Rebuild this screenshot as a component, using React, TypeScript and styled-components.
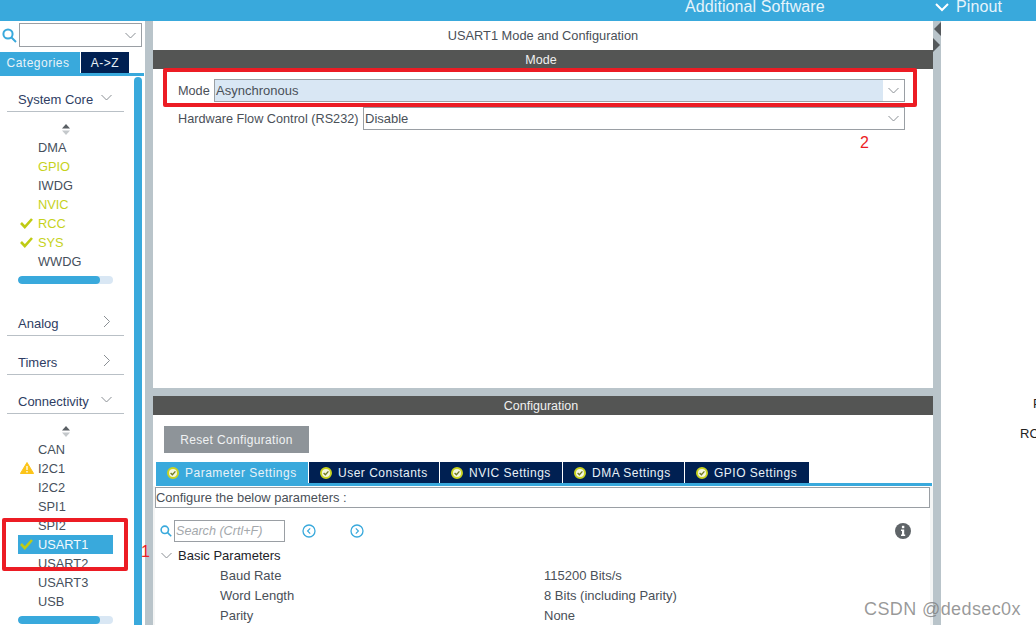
import styled, { createGlobalStyle } from "styled-components";

const GlobalStyle = createGlobalStyle`
  html, body {
    margin: 0;
    padding: 0;
    background: #fff;
  }
  body {
    font-family: 'Liberation Sans', Arial, sans-serif;
    font-size: 13px;
    color: #46505c;
  }
  * {
    box-sizing: border-box;
  }
`;

const Page = styled.div`
  position: relative;
  width: 1036px;
  height: 625px;
  overflow: hidden;
  display: flex;
  flex-direction: column;
`;

const TopBar = styled.header`
  height: 21px;
  flex: none;
  background: #39a9dc;
  color: #e6f4fb;
  font-size: 16px;
  letter-spacing: 0.1px;
  line-height: 14px;
  display: flex;
  justify-content: flex-end;
  overflow: hidden;
`;

const TopLabel = styled.span<{ $width: number }>`
  width: ${({ $width }) => $width}px;
  display: flex;
  align-items: center;
  gap: 7px;
  height: 14px;
`;

const Body = styled.div`
  flex: 1;
  display: flex;
  min-height: 0;
`;

/* left category list */
const Sidebar = styled.aside`
  width: 145px;
  flex: none;
  display: flex;
  flex-direction: column;
`;

const SearchRow = styled.div`
  height: 31px;
  flex: none;
  padding: 2px 3px 0 2px;
  display: flex;
  gap: 2px;
`;

const SearchSlot = styled.span`
  margin-top: 5px;
  display: flex;
  height: 15px;
`;

const ComboBox = styled.div`
  width: 123px;
  height: 24px;
  border: 1px solid #9a9fa4;
  display: flex;
  align-items: center;
  justify-content: flex-end;
  padding-right: 5px;
`;

const SideTabs = styled.div`
  height: 24px;
  flex: none;
  display: flex;
  align-items: stretch;
  border-bottom: 3px solid #39a9dc;
  width: 144px;
`;

const SideTab = styled.div<{ $active?: boolean; $width: number }>`
  width: ${({ $width }) => $width}px;
  margin-right: 1px;
  padding-right: ${({ $active }) => ($active ? 4 : 0)}px;
  background: ${({ $active }) => ($active ? "#39a9dc" : "#002052")};
  color: #e8f2f8;
  font-size: 12px;
  letter-spacing: 0.5px;
  display: flex;
  align-items: center;
  justify-content: center;
`;

const SideBody = styled.div`
  flex: 1;
  min-height: 0;
  display: flex;
  overflow: hidden;
`;

const SideList = styled.div`
  width: 134px;
  flex: none;
  padding: 0 10px 0 7px;
`;

const SideScroll = styled.div`
  width: 8px;
  margin-top: 1px;
  margin-bottom: -8px;
  background: #39a9dc;
  border-radius: 4px 4px 0 0;
`;

const GroupHead = styled.div<{ $top: number }>`
  margin-top: ${({ $top }) => $top}px;
  height: 25px;
  border-bottom: 1px solid #b9c0c6;
  padding: 0 12px 0 11px;
  display: flex;
  justify-content: space-between;
  align-items: center;
  color: #2e3d63;
  font-size: 13px;
  svg {
    margin-top: -4px;
  }
`;

const Stepper = styled.div`
  height: 23px;
  padding-top: 12px;
  margin-bottom: 3px;
  display: flex;
  justify-content: center;
`;

const ItemRow = styled.div<{ $selected?: boolean; $lit?: boolean }>`
  width: 95px;
  height: 19px;
  margin-left: 11px;
  padding-left: 20px;
  position: relative;
  display: flex;
  align-items: center;
  font-size: 12.8px;
  background: ${({ $selected }) => ($selected ? "#39a9dc" : "transparent")};
  color: ${({ $selected, $lit }) =>
    $selected ? "#f2f9fd" : $lit ? "#c6d21c" : "#46505c"};
`;

const ItemIcon = styled.span`
  position: absolute;
  left: 2px;
  top: 3px;
  display: flex;
`;

const HScroll = styled.div`
  width: 95px;
  height: 8px;
  margin-left: 11px;
  margin-top: 5px;
  border-radius: 4px;
  background: #d9e7f4;
  overflow: hidden;
`;

const HScrollThumb = styled.div`
  width: 82px;
  height: 100%;
  border-radius: 4px;
  background: #39a9dc;
`;

const Gutter = styled.div`
  width: 8px;
  flex: none;
  background: #b9c4ca;
  position: relative;
`;

/* middle column */
const Center = styled.main`
  width: 780px;
  flex: none;
  display: flex;
  flex-direction: column;
  background: #b9c4ca;
`;

const ModePanel = styled.section`
  height: 367px;
  flex: none;
  background: #fff;
`;

const PanelTitle = styled.div`
  height: 29px;
  display: flex;
  align-items: center;
  justify-content: center;
  font-size: 12.8px;
  color: #4a5058;
`;

const DarkBar = styled.div`
  height: 19px;
  padding-right: 4px;
  background: #545554;
  color: #f0f0f0;
  font-size: 12.5px;
  display: flex;
  align-items: center;
  justify-content: center;
`;

const FormRow = styled.div<{ $top: number }>`
  margin-top: ${({ $top }) => $top}px;
  height: 23px;
  padding-left: 25px;
  width: 752px;
  display: flex;
  align-items: center;
  color: #4a5058;
  font-size: 13px;
`;

const FormLabel = styled.span<{ $width: number }>`
  width: ${({ $width }) => $width}px;
  flex: none;
  font-size: 12.7px;
  white-space: nowrap;
`;

const Select = styled.div`
  flex: 1;
  height: 23px;
  border: 1px solid #9a9fa4;
  display: flex;
  align-items: stretch;
  min-width: 0;
`;

const SelectValue = styled.div<{ $filled?: boolean }>`
  flex: 1;
  padding-left: 1px;
  display: flex;
  align-items: center;
  background: ${({ $filled }) => ($filled ? "#d9e7f4" : "transparent")};
`;

const SelectArrow = styled.div`
  width: 21px;
  display: flex;
  align-items: center;
  justify-content: center;
`;

const ConfigPanel = styled.section`
  flex: 1;
  min-height: 0;
  margin-top: 8px;
  background: #fff;
  display: flex;
  flex-direction: column;
`;

const ResetButton = styled.div`
  width: 145px;
  height: 27px;
  margin: 11px 0 9px 11px;
  flex: none;
  background: #8e9499;
  color: #f0f2f3;
  letter-spacing: 0.35px;
  font-size: 12px;
  display: flex;
  align-items: center;
  justify-content: center;
`;

const TabStrip = styled.div`
  height: 24px;
  flex: none;
  margin: 0 1px 0 3px;
  display: flex;
  border-bottom: 3px solid #39a9dc;
`;

const Tab = styled.div<{ $active?: boolean; $width: number }>`
  width: ${({ $width }) => $width}px;
  margin-right: 1px;
  background: ${({ $active }) => ($active ? "#39a9dc" : "#002052")};
  color: #e8f2f8;
  letter-spacing: 0.5px;
  font-size: 12px;
  display: flex;
  align-items: center;
  padding-left: 11px;
  gap: 6px;
`;

const ConfigBody = styled.div`
  flex: 1;
  min-height: 0;
  margin: 0 3px 0 2px;
  background: #fff;
  box-shadow: -2px 0 #f4f5f5, 3px 0 #f4f5f5;
`;

const HintBox = styled.div`
  width: 775px;
  height: 21px;
  margin-top: 1px;
  border: 1px solid #9a9fa4;
  display: flex;
  align-items: center;
  font-size: 12.9px;
  color: #4a5058;
`;

const ToolRow = styled.div`
  height: 22px;
  margin-top: 12px;
  display: flex;
  align-items: center;
  padding-left: 5px;
`;

const SearchInput = styled.div`
  width: 111px;
  height: 22px;
  margin-left: 2px;
  border: 1px solid #9a9fa4;
  padding-left: 1px;
  display: flex;
  align-items: center;
  color: #a4a8ac;
  font-style: italic;
  font-size: 12.6px;
`;

const NavButton = styled.span<{ $left: number }>`
  margin-left: ${({ $left }) => $left}px;
  display: flex;
`;

const ParamTree = styled.div`
  margin-top: 3px;
  font-size: 13px;
`;

const TreeHead = styled.div`
  height: 20px;
  padding-left: 6px;
  display: flex;
  align-items: center;
  gap: 6px;
  color: #1d2228;
`;

const ParamRow = styled.div`
  height: 20px;
  display: grid;
  grid-template-columns: 324px 1fr;
  padding-left: 65px;
  align-items: center;
  color: #4a5058;
`;

const RightPane = styled.div`
  flex: 1;
  background: #fff;
  position: relative;
`;

const PinLabel = styled.span<{ $top: number; $left: number }>`
  position: absolute;
  top: ${({ $top }) => $top}px;
  left: ${({ $left }) => $left}px;
  font-size: 13px;
  color: #222;
`;

const HandleIcon = styled.svg`
  position: absolute;
  left: 0;
  top: 0;
`;

/* annotations on top of the screenshot */
const RedBox = styled.div<{ $x: number; $y: number; $w: number; $h: number }>`
  position: absolute;
  left: ${({ $x }) => $x}px;
  top: ${({ $y }) => $y}px;
  width: ${({ $w }) => $w}px;
  height: ${({ $h }) => $h}px;
  border: 4px solid #ec1c24;
  border-radius: 2px;
`;

const RedNumber = styled.span<{ $x: number; $y: number }>`
  position: absolute;
  left: ${({ $x }) => $x}px;
  top: ${({ $y }) => $y}px;
  color: #ec1c24;
  font-size: 16px;
  line-height: 18px;
`;

const Watermark = styled.span`
  position: absolute;
  left: 864px;
  top: 598px;
  font-size: 18px;
  line-height: 22px;
  color: rgba(120, 120, 120, 0.75);
  letter-spacing: 0.4px;
`;

const Chevron = ({ color = "#8a8f94", open = true }: { color?: string; open?: boolean }) => (
  <svg width="11" height="11" viewBox="0 0 11 11" fill="none" stroke={color} strokeWidth="1">
    {open ? <path d="M0.5 3 L5.5 8 L10.5 3" /> : <path d="M3 0 L8.5 5.5 L3 11" />}
  </svg>
);

const SearchIcon = ({ size = 15 }: { size?: number }) => (
  <svg width={size} height={size} viewBox="0 0 15 15" fill="none" stroke="#39a9dc" strokeWidth="2">
    <circle cx="6" cy="6" r="4.6" />
    <path d="M9.5 9.5 L14 14" />
  </svg>
);

const UpDown = () => (
  <svg width="8" height="11" viewBox="0 0 8 11">
    <path d="M4 0 L8 4.5 H0 Z" fill="#5a5f64" />
    <path d="M4 11 L8 6.5 H0 Z" fill="#c4c8cb" />
  </svg>
);

const CheckMark = () => (
  <svg width="13" height="12" viewBox="0 0 13 12" fill="none" stroke="#bfcb14" strokeWidth="2.6">
    <path d="M1 6 L4.8 10 L12 2" />
  </svg>
);

const Warning = () => (
  <svg width="14" height="12" viewBox="0 0 14 12">
    <path d="M7 0.5 L13.6 11.5 H0.4 Z" fill="#fcc419" stroke="#fcc419" strokeLinejoin="round" />
    <path d="M7 4 V8 M7 9 V10.4" stroke="#fff" strokeWidth="1.3" />
  </svg>
);

const TabCheck = () => (
  <svg width="12" height="12" viewBox="0 0 12 12" fill="none">
    <circle cx="6" cy="6" r="5" fill="#f4f6e0" stroke="#c9d320" strokeWidth="2" />
    <path d="M3.6 6 L5.4 7.8 L8.4 4.4" stroke="#6f7a20" strokeWidth="1.3" />
  </svg>
);

const NavCircle = ({ dir }: { dir: "left" | "right" }) => (
  <svg width="14" height="14" viewBox="0 0 14 14" fill="none" stroke="#39a9dc">
    <circle cx="7" cy="7" r="6" strokeWidth="1.3" />
    <path d={dir === "left" ? "M8.2 4.4 L5.6 7 L8.2 9.6" : "M5.8 4.4 L8.4 7 L5.8 9.6"} strokeWidth="1.2" />
  </svg>
);

const InfoIcon = () => (
  <svg width="16" height="16" viewBox="0 0 16 16">
    <circle cx="8" cy="8" r="8" fill="#5f6468" />
    <rect x="6.9" y="2.8" width="2.4" height="2.4" fill="#fff" />
    <path d="M6 6.6 H9.2 V11.6 H10.2 V13 H6 V11.6 H7 V8 H6 Z" fill="#fff" />
  </svg>
);

type Item = { name: string; lit?: boolean; check?: boolean; warn?: boolean; selected?: boolean };

const systemCore: Item[] = [
  { name: "DMA" },
  { name: "GPIO", lit: true },
  { name: "IWDG" },
  { name: "NVIC", lit: true },
  { name: "RCC", lit: true, check: true },
  { name: "SYS", lit: true, check: true },
  { name: "WWDG" },
];

const connectivity: Item[] = [
  { name: "CAN" },
  { name: "I2C1", warn: true },
  { name: "I2C2" },
  { name: "SPI1" },
  { name: "SPI2" },
  { name: "USART1", check: true, selected: true },
  { name: "USART2" },
  { name: "USART3" },
  { name: "USB" },
];

const tabs = [
  { label: "Parameter Settings", width: 152, active: true },
  { label: "User Constants", width: 130 },
  { label: "NVIC Settings", width: 122 },
  { label: "DMA Settings", width: 121 },
  { label: "GPIO Settings", width: 124 },
];

const params = [
  ["Baud Rate", "115200 Bits/s"],
  ["Word Length", "8 Bits (including Parity)"],
  ["Parity", "None"],
];

const ItemList = ({ items }: { items: Item[] }) => (
  <>
    <Stepper>
      <UpDown />
    </Stepper>
    {items.map((item) => (
      <ItemRow key={item.name} $lit={item.lit} $selected={item.selected}>
        {item.check && (
          <ItemIcon>
            <CheckMark />
          </ItemIcon>
        )}
        {item.warn && (
          <ItemIcon>
            <Warning />
          </ItemIcon>
        )}
        {item.name}
      </ItemRow>
    ))}
    <HScroll>
      <HScrollThumb />
    </HScroll>
  </>
);

function App() {
  return (
    <Page>
      <GlobalStyle />
      <TopBar>
        <TopLabel $width={250}>Additional Software</TopLabel>
        <TopLabel $width={101}>
          <svg width="14" height="9" viewBox="0 0 14 9" fill="none" stroke="#fff" strokeWidth="2">
            <path d="M1 1 L7 7 L13 1" />
          </svg>
          Pinout
        </TopLabel>
      </TopBar>
      <Body>
        <Sidebar>
          <SearchRow>
            <SearchSlot>
              <SearchIcon />
            </SearchSlot>
            <ComboBox>
              <Chevron />
            </ComboBox>
          </SearchRow>
          <SideTabs>
            <SideTab $active $width={80}>Categories</SideTab>
            <SideTab $width={48}>A-&gt;Z</SideTab>
          </SideTabs>
          <SideBody>
            <SideList>
              <GroupHead $top={11}>
                System Core
                <Chevron />
              </GroupHead>
              <ItemList items={systemCore} />
              <GroupHead $top={27}>
                Analog
                <Chevron open={false} />
              </GroupHead>
              <GroupHead $top={14}>
                Timers
                <Chevron open={false} />
              </GroupHead>
              <GroupHead $top={14}>
                Connectivity
                <Chevron />
              </GroupHead>
              <ItemList items={connectivity} />
            </SideList>
            <SideScroll />
          </SideBody>
        </Sidebar>
        <Gutter />
        <Center>
          <ModePanel>
            <PanelTitle>USART1 Mode and Configuration</PanelTitle>
            <DarkBar>Mode</DarkBar>
            <FormRow $top={10}>
              <FormLabel $width={36}>Mode</FormLabel>
              <Select>
                <SelectValue $filled>Asynchronous</SelectValue>
                <SelectArrow>
                  <Chevron />
                </SelectArrow>
              </Select>
            </FormRow>
            <FormRow $top={5}>
              <FormLabel $width={185}>Hardware Flow Control (RS232)</FormLabel>
              <Select>
                <SelectValue>Disable</SelectValue>
                <SelectArrow>
                  <Chevron />
                </SelectArrow>
              </Select>
            </FormRow>
          </ModePanel>
          <ConfigPanel>
            <DarkBar>Configuration</DarkBar>
            <ResetButton>Reset Configuration</ResetButton>
            <TabStrip>
              {tabs.map((tab) => (
                <Tab key={tab.label} $active={tab.active} $width={tab.width}>
                  <TabCheck />
                  {tab.label}
                </Tab>
              ))}
            </TabStrip>
            <ConfigBody>
              <HintBox>Configure the below parameters :</HintBox>
              <ToolRow>
                <SearchIcon size={12} />
                <SearchInput>Search (Crtl+F)</SearchInput>
                <NavButton $left={17}>
                  <NavCircle dir="left" />
                </NavButton>
                <NavButton $left={34}>
                  <NavCircle dir="right" />
                </NavButton>
                <NavButton $left={531}>
                  <InfoIcon />
                </NavButton>
              </ToolRow>
              <ParamTree>
                <TreeHead>
                  <Chevron />
                  Basic Parameters
                </TreeHead>
                {params.map(([name, value]) => (
                  <ParamRow key={name}>
                    <span>{name}</span>
                    <span>{value}</span>
                  </ParamRow>
                ))}
              </ParamTree>
            </ConfigBody>
          </ConfigPanel>
        </Center>
        <Gutter>
          <HandleIcon width="8" height="36" viewBox="0 0 8 36">
            <path d="M8 1 L1 8 L8 15 Z" fill="#55595c" />
            <path d="M0 17 L7 24 L0 31 Z" fill="#55595c" />
          </HandleIcon>
        </Gutter>
        <RightPane>
          <PinLabel $top={375} $left={92}>P</PinLabel>
          <PinLabel $top={405} $left={79}>RC</PinLabel>
        </RightPane>
      </Body>
      <RedBox $x={163} $y={68} $w={754} $h={39} />
      <RedBox $x={2} $y={518} $w={126} $h={53} />
      <RedNumber $x={860} $y={134}>2</RedNumber>
      <RedNumber $x={141} $y={543}>1</RedNumber>
      <Watermark>CSDN @dedsec0x</Watermark>
    </Page>
  );
}

export default App;
